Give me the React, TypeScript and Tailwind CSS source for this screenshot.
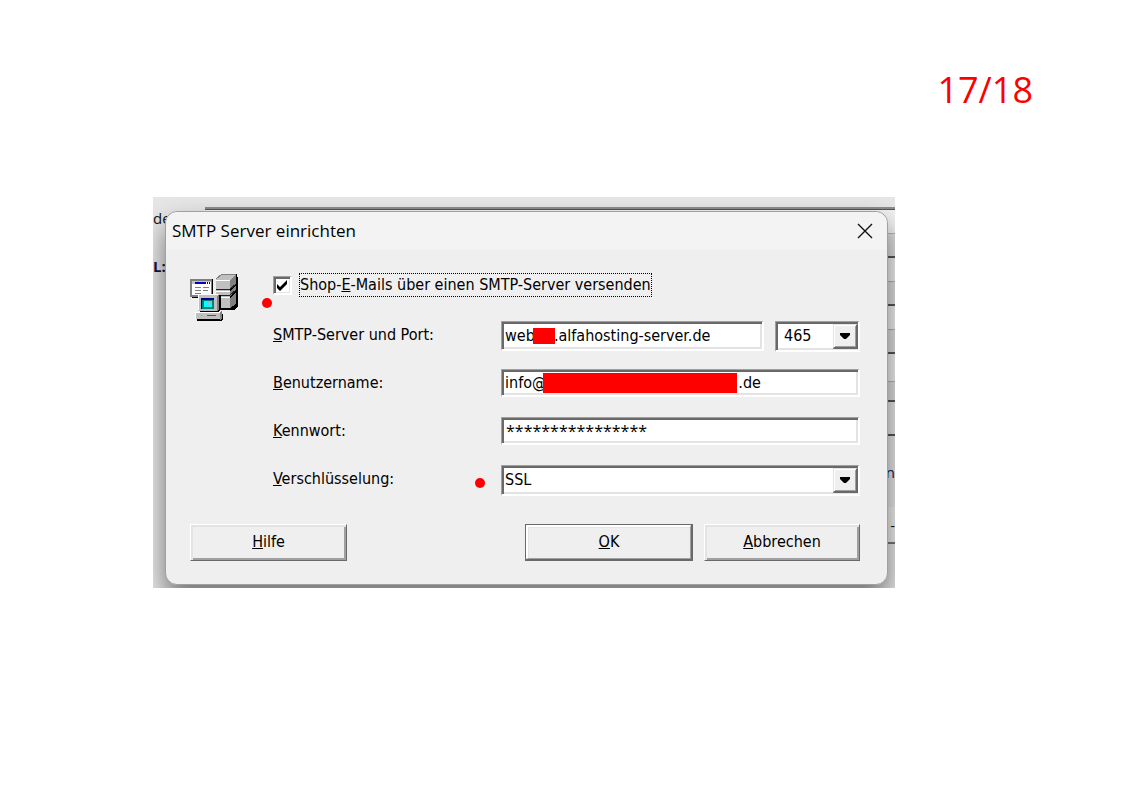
import { useState } from "react";

const FIELD =
  "w-full rounded-none border-t border-l border-r-2 border-b-2 border-t-[#a0a0a0] border-l-[#a0a0a0] border-r-white border-b-white bg-white text-black shadow-[inset_2px_2px_0_#696969,inset_-2px_-2px_0_#e3e3e3] outline-none";

const BUTTON =
  "h-[37px] border-t border-l border-r border-b border-t-white border-l-white border-r-[#696969] border-b-[#696969] bg-[#efefef] pb-px shadow-[inset_2px_2px_0_#e3e3e3,inset_-2px_-2px_0_#a0a0a0]";

const PORTS = ["465", "587", "25"];
const MODES = ["SSL", "TLS", "Keine"];

export default function App() {
  const [enabled, setEnabled] = useState(true);

  return (
    <main className="bg-white pr-[235px] pb-16 pl-[153px] font-['Open_Sans','Noto_Sans',sans-serif] text-black">
      <header className="-mr-[138px] flex h-[197px] justify-end pt-[65px]">
        <span className="text-[36px] leading-[50px] text-[#ff0000]">17/18</span>
      </header>

      <section className="relative overflow-hidden bg-[#e6e6e6] pt-[14px] pr-[7px] pb-[3px] pl-3">
        <Backdrop />

        <div
          role="dialog"
          aria-labelledby="dialog-title"
          className="relative rounded-xl border border-[#a0a0a0] bg-[#efefef] shadow-[0_14px_26px_rgba(0,0,0,0.5)]"
        >
          <div className="flex h-[38px] items-center justify-between rounded-t-xl bg-[#f3f3f3] pr-[14px] pl-[6px]">
            <h1 id="dialog-title" className="text-[17px] leading-6">SMTP Server einrichten</h1>
            <button aria-label="Schließen" className="p-0">
              <svg width="16" height="16" viewBox="0 0 16 16" fill="none" stroke="#111" strokeWidth="1.4">
                <path d="M1 1 15 15M15 1 1 15" />
              </svg>
            </button>
          </div>

          <div className="pt-[23px] pr-[27px] pb-[23px] pl-6 font-['DejaVu_Sans_Condensed','Noto_Sans',sans-serif] text-[16px] leading-5">
            <div className="flex">
              <div className="w-[83px] shrink-0 pt-px">
                <ServerIcon />
              </div>
              <form className="grow">
                <label className="relative flex h-12 items-start">
                  <span className="relative mt-[3px] mr-[7px] block size-[19px]">
                    <input
                      type="checkbox"
                      checked={enabled}
                      onChange={(e) => setEnabled(e.target.checked)}
                      className="block size-[19px] appearance-none border-t border-l border-r-2 border-b-2 border-t-[#a0a0a0] border-l-[#a0a0a0] border-r-white border-b-white bg-white shadow-[inset_2px_2px_0_#696969,inset_-1px_-1px_0_#e3e3e3]"
                    />
                    {enabled && (
                      <svg className="pointer-events-none absolute inset-0" width="19" height="19" viewBox="0 0 19 19">
                        <path d="M4 8v4l3 3 7-7V4L7 11z" fill="#000" />
                      </svg>
                    )}
                  </span>
                  <span className="border border-dotted border-black leading-[22px]">
                    Shop-<u>E</u>-Mails über einen SMTP-Server versenden
                  </span>
                  <Dot className="top-[25px] -left-[11px]" />
                </label>

                <Row id="host" hotkey="S" label="MTP-Server und Port:">
                  <div className="relative grow">
                    <input id="host" defaultValue={"web\u2003\u2004.alfahosting-server.de"} className={`${FIELD} h-[30px] pl-[3px]`} />
                    <Redaction className="top-[7px] left-8 h-4 w-[22px]" />
                  </div>
                  <Dropdown label="Port" options={PORTS} className="ml-[11px] w-[85px]" pad="pl-2" />
                </Row>
                <Row id="user" hotkey="B" label="enutzername:">
                  <div className="relative grow">
                    <input id="user" defaultValue={"info@" + "\u2003".repeat(13) + "\u2004.de"} className={`${FIELD} h-7 pl-[3px]`} />
                    <Redaction className="top-1 left-[42px] h-5 w-[194px]" />
                  </div>
                </Row>
                <Row id="password" hotkey="K" label="ennwort:">
                  <input id="password" defaultValue="****************" className={`${FIELD} h-7 pl-1 font-['Open_Sans','Noto_Sans',sans-serif]`} />
                </Row>
                <Row id="mode" hotkey="V" label="erschlüsselung:">
                  <Dropdown id="mode" label="Verschlüsselung" options={MODES} className="grow" pad="pl-[3px]" />
                  <Dot className="top-[13px] left-[202px]" />
                </Row>
              </form>
            </div>

            <div className="mt-[11px] flex justify-between">
              <button className={`${BUTTON} w-[157px]`}><u>H</u>ilfe</button>
              <div className="flex gap-[11px]">
                <div className="border-t border-l border-r-2 border-b-2 border-[#696969]">
                  <button className="block h-[34px] w-[165px] border-t-2 border-l-2 border-r border-b border-t-white border-l-white border-r-[#a0a0a0] border-b-[#a0a0a0] bg-[#efefef] pb-px shadow-[inset_1px_1px_0_#e3e3e3]"><u>O</u>K</button>
                </div>
                <button className={`${BUTTON} w-[156px]`}><u>A</u>bbrechen</button>
              </div>
            </div>
          </div>
        </div>
      </section>
    </main>
  );
}

function Row({ id, hotkey, label, children }: { id: string; hotkey: string; label: string; children: React.ReactNode }) {
  return (
    <div className="relative flex h-12 items-start">
      <label htmlFor={id} className="w-[228px] shrink-0 pt-1">
        <u>{hotkey}</u>
        {label}
      </label>
      {children}
    </div>
  );
}

function Dropdown({ id, label, options, className, pad }: { id?: string; label: string; options: string[]; className: string; pad: string }) {
  return (
    <div className={`relative ${className}`}>
      <select id={id} aria-label={label} className={`${FIELD} ${pad} h-[31px] appearance-none`}>
        {options.map((o) => (
          <option key={o}>{o}</option>
        ))}
      </select>
      <span className="pointer-events-none absolute top-[3px] right-[2px] bottom-[3px] flex w-[25px] items-center justify-center border-t border-l border-r-2 border-b-2 border-t-[#e3e3e3] border-l-[#e3e3e3] border-r-[#696969] border-b-[#696969] bg-[#efefef] shadow-[inset_1px_1px_0_#fff,inset_-1px_-1px_0_#a0a0a0]">
        <svg width="10" height="6" viewBox="0 0 10 6">
          <path d="M0 0h10v2L6 6H4L0 2z" />
        </svg>
      </span>
    </div>
  );
}

function Redaction({ className }: { className: string }) {
  return <span className={`absolute bg-[#ff0000] ${className}`} />;
}

function Dot({ className }: { className: string }) {
  return <span className={`absolute size-[10px] rounded-full bg-[#ff0000] ${className}`} />;
}

// the parent window, visible only around the dialog's edges
function Backdrop() {
  return (
    <div aria-hidden="true" className="absolute inset-0 flex justify-between text-[15px] leading-5 text-[#111]">
      <div className="w-[52px] shrink-0">
        <p className="mt-[11px]">de</p>
        <p className="mt-7 font-bold text-[#12124a]">L:</p>
      </div>
      <div className="mt-[10px] grow border-t-2 border-[#8c8c8c]">
        <div className="flex flex-col border-t border-[#555]">
          <div className="h-6 border-b border-[#b4b4b4] bg-[#f0f0f0]" />
          <div className="h-6 border-b-2 border-[#555] bg-[#dedede]" />
          <div className="h-6 border-b border-[#b4b4b4] bg-[#f0f0f0]" />
          <div className="h-6 border-b-2 border-[#555] bg-[#dedede]" />
          <div className="h-6 border-b border-[#b4b4b4] bg-[#f0f0f0]" />
          <div className="h-6 border-b-2 border-[#555] bg-[#dedede]" />
          <div className="h-7 border-b border-[#b4b4b4] bg-[#f0f0f0]" />
          <div className="h-5 border-b-2 border-[#555] bg-[#dedede]" />
          <div className="h-[34px] border-b-2 border-[#555] bg-[#e6e6e6]" />
          <div className="flex h-[72px] items-center justify-end border-b border-[#eee] text-[#12124a]">n</div>
          <div className="flex h-9 items-center justify-end border-b-2 border-[#777] bg-[#eee]">-</div>
        </div>
      </div>
    </div>
  );
}

function ServerIcon() {
  return (
    <svg width="49" height="49" viewBox="0 0 49 49" shapeRendering="crispEdges">
      {/* tower */}
      <path d="M32 0h15v3h1v29l-4 4H27V6z" fill="#000" />
      <path d="M26 5l6-6h13v2l-5 5v28H26z" fill="#c0c0c0" />
      <path d="M40 6l6-6v10l-6 5zM40 17l6-5v5l-6 5zM40 24l6-5v11l-6 4z" fill="#808080" />
      <path d="M26 6h14M26 17h14M26 23h14" stroke="#fff" />
      <path d="M26 15h14l6-5M26 21h14l6-5" stroke="#222" fill="none" />
      <path d="M26 5l6-5h14" stroke="#808080" fill="none" />
      {/* window */}
      <path d="M0 5h23v18H0z" fill="#808080" />
      <path d="M2 7h19v14H2z" fill="#fff" />
      <path d="M2 7h19v1H2zM2 8h3v2H2z" fill="#c0c0c0" />
      <path d="M5 8h15v2H5z" fill="#0000c8" />
      <path d="M16 8h1v2h-1zM18 8h1v2h-1z" fill="#fff" />
      <path d="M5 13h6M13 13h6M5 16h6M13 16h5M5 19h6" stroke="#808080" />
      <path d="M22 5h1v18h-1zM2 23h6v1H2z" fill="#000" />
      {/* monitor */}
      <path d="M10 21h21v14l-3 3H10z" fill="#000" />
      <path d="M8 20h21v15l-2 2H8z" fill="#c0c0c0" />
      <path d="M8 20h20v1H9v15H8z" fill="#fff" />
      <path d="M27 22l2-2v15l-2 2z" fill="#808080" />
      <path d="M11 24h13v11H11z" fill="#000080" />
      <path d="M12 26h12v9H12z" fill="#008080" />
      <path d="M14 27h8v6h-8z" fill="#00ffff" />
      <path d="M17 27h4v2h-2v2h-2z" fill="#80c8c8" />
      {/* base */}
      <path d="M7 40h26v5l-2 2H7z" fill="#000" />
      <path d="M5 38h26v7H5z" fill="#c0c0c0" />
      <path d="M5 38h26v1H6v6H5z" fill="#fff" />
      <path d="M30 38l2-1v7l-2 2z" fill="#808080" />
      <path d="M11 41h1v1h-1z" fill="#00ff00" />
      <path d="M17 41h9v1h-9z" fill="#555" />
    </svg>
  );
}
